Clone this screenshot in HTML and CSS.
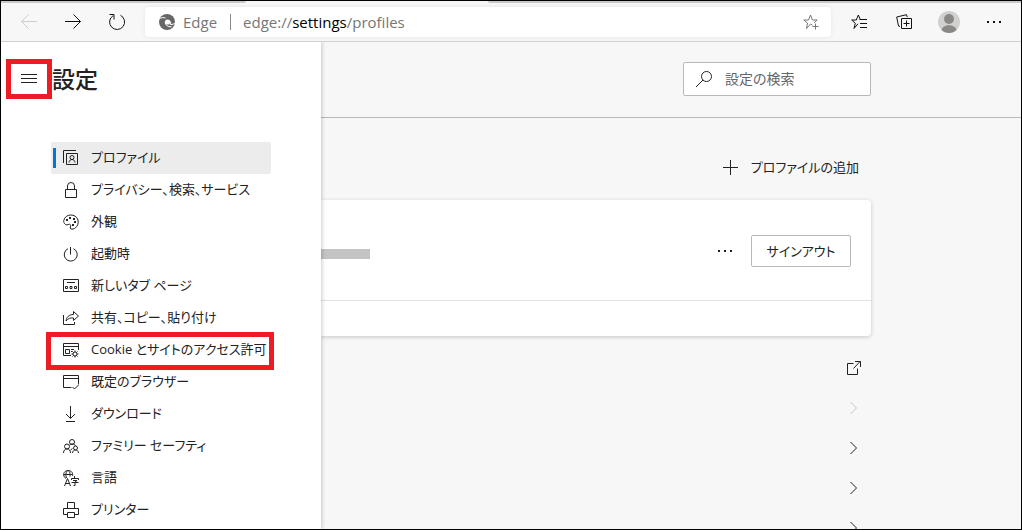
FILE: index.html
```html
<!DOCTYPE html>
<html lang="ja">
  <head>
    <meta charset="utf-8">
    <title>設定</title>
    <link rel="stylesheet" href="styles.css">
  </head>
  <body>
    <div class="window">
      <div class="tabstrip">
        <div class="tab-left"></div>
        <div class="tab-active"></div>
        <div class="tab-right"></div>
      </div>

      <div class="toolbar">
        <button class="tool disabled" aria-label="戻る">
          <svg width="18" height="18" viewBox="0 0 18 18"><path d="M17 8.500H1.500M8.500 1.500l-7 7 7 7"/></svg>
        </button>
        <button class="tool" aria-label="進む">
          <svg width="18" height="18" viewBox="0 0 18 18"><path d="M1 8.500h15.500M9.500 1.500l7 7-7 7"/></svg>
        </button>
        <button class="tool" aria-label="更新">
          <svg width="18" height="18" viewBox="0 0 18 18"><path d="M12.500 2.300A7.500 7.500 0 1 1 5 2.700M1.500 1.500H6v5"/></svg>
        </button>
        <div class="address">
          <svg class="edge-logo" width="16" height="16" viewBox="0 0 16 16">
            <circle cx="8" cy="8" r="8"/>
            <circle class="hole" cx="8.500" cy="8" r="2.600"/>
            <path class="cut" d="M0 5C2 3.500 4.500 3.300 6.500 4M6.200 8.500C6.500 11.500 9 13 12.500 12.800M10.500 6.500C12 8 12 10 11 11M12 10.500c1.500 0 3-.5 4-1.500"/>
          </svg>
          <span class="brand">Edge</span>
          <span class="separator"></span>
          <span class="url">edge://<b>settings</b>/profiles</span>
          <button class="favorite" aria-label="お気に入りに追加">
            <svg width="16" height="16" viewBox="0 0 16 16"><path d="M9.500 11.300L7.500 10 3.500 14.500 4.500 9 .8 6h4.700l2-5 2 5h4.700l-3.200 2.700M12.500 9.500v6M9.500 12.500h6"/></svg>
          </button>
        </div>
        <button class="tool wide" aria-label="お気に入り">
          <svg width="16" height="16" viewBox="0 0 16 16"><path d="M7 9.800L3 14.500 4.300 9.300.7 6h4.600l2-5 2 4.500M8.500 5.500H16M9 9.500h7M9 13.500h7"/></svg>
        </button>
        <button class="tool wide" aria-label="コレクション">
          <svg width="16" height="16" viewBox="0 0 16 16"><path d="M5.500 4.500h10v10h-10zM10.500 6.500v6M7.500 9.500h6M4 12.500L2.500 12 .7 3 10.500.7l.8 2.500"/></svg>
        </button>
        <button class="tool wide" aria-label="プロファイル">
          <svg class="avatar" width="22" height="22" viewBox="0 0 22 22">
            <circle class="ring" cx="11" cy="11" r="11"/>
            <circle class="person" cx="11" cy="8" r="5"/>
            <path class="person" d="M3.500 19c1-6.500 14-6.500 15 0-4 4-11 4-15 0z"/>
          </svg>
        </button>
        <button class="tool wide" aria-label="その他">
          <svg class="dots" width="16" height="4" viewBox="0 0 16 4"><path d="M1 1h2v2H1zM7 1h2v2H7zM13 1h2v2h-2z"/></svg>
        </button>
      </div>

      <div class="page">
        <aside class="sidebar">
          <div class="title-row">
            <button class="menu-button" aria-label="メニュー">
              <svg width="16" height="10" viewBox="0 0 16 10"><path d="M0 .5h16M0 4.500h16M0 8.500h16"/></svg>
            </button>
            <h1>設定</h1>
          </div>
          <nav>
            <a href="#" class="nav-item active">
              <svg width="16" height="16" viewBox="0 0 16 16"><path d="M3.500 3.500h11v11h-11zM.5 13V.5H13"/><circle cx="9" cy="7.500" r="2"/><path d="M6 12.500c0-4 6-4 6 0"/></svg>
              <span>プロファイル</span>
            </a>
            <a href="#" class="nav-item">
              <svg width="16" height="16" viewBox="0 0 16 16"><path d="M2.500 7.500h11v8h-11zM4.500 7.500V4a3.500 3.500 0 0 1 7 0v3.500"/></svg>
              <span>プライバシー、検索、サービス</span>
            </a>
            <a href="#" class="nav-item">
              <svg width="16" height="16" viewBox="0 0 16 16"><path d="M.8 6.500C2-.5 13-1 15 6c1.500 7-5 10-7 9-2-1.200.5-3-.5-4.200C6 9 4.500 12 2.500 10.500 1 9.300.5 8 .8 6.500z"/><path class="solid" d="M3 5h2v2H3zM6 3h2v2H6zM10 4h2v2h-2zM11 7h2v2h-2zM9 10h2v2H9z"/></svg>
              <span>外観</span>
            </a>
            <a href="#" class="nav-item">
              <svg width="16" height="16" viewBox="0 0 16 16"><path d="M7.500 1v7.500M5 2.700a6.500 6.500 0 1 0 5.500 0"/></svg>
              <span>起動時</span>
            </a>
            <a href="#" class="nav-item">
              <svg width="16" height="16" viewBox="0 0 16 16"><path d="M.5 1.500h15v12H.5zM4 4.500h8M2.500 8.500h2v2h-2zM7 8.500h2v2H7zM11.500 8.500h2v2h-2z"/></svg>
              <span>新しいタブ ページ</span>
            </a>
            <a href="#" class="nav-item">
              <svg width="16" height="16" viewBox="0 0 16 16"><path d="M.5 5v9.500h11V12M3 11c.5-4 3-6.500 7.500-6.500v-3l5 4.500-5 4.500V8C7.500 7.500 5 8.500 3 11z"/></svg>
              <span>共有、コピー、貼り付け</span>
            </a>
            <a href="#" class="nav-item marked">
              <svg width="16" height="16" viewBox="0 0 16 16"><path d="M8 13.500H.5v-12h15V8M.5 4.500h15M2.500 7.500h4v4h-4zM8 7.500h3M8 9.500h1.500"/><circle cx="12" cy="12" r="2"/><path d="M12 8.500V10M12 14v1.500M8.500 12H10M14 12h1.500M9.500 9.500l1 1M13.500 13.500l1 1M9.500 14.500l1-1M13.500 10.500l1-1"/></svg>
              <span>Cookie とサイトのアクセス許可</span>
            </a>
            <a href="#" class="nav-item">
              <svg width="16" height="16" viewBox="0 0 16 16"><path d="M8.500 13.500H.5v-12h15v9M.5 4.500h15M9.500 13l2 2 4-4"/></svg>
              <span>既定のブラウザー</span>
            </a>
            <a href="#" class="nav-item">
              <svg width="16" height="16" viewBox="0 0 16 16"><path d="M7.500 0v12M3 8l4.500 4.500L12 8M3 15.500h9"/></svg>
              <span>ダウンロード</span>
            </a>
            <a href="#" class="nav-item">
              <svg width="16" height="16" viewBox="0 0 16 16"><circle cx="9" cy="4" r="2.500"/><circle cx="4" cy="8.500" r="2.500"/><circle cx="12.500" cy="10" r="2"/><path d="M.5 15c0-5.500 7-5.500 7 0M9.500 15c0-4 6-4 6 0M6.500 7c2-1.500 5-1.500 6 1M7.500 12l2-1.500"/></svg>
              <span>ファミリー セーフティ</span>
            </a>
            <a href="#" class="nav-item">
              <svg width="16" height="16" viewBox="0 0 16 16"><path d="M3 8.500C-1 6 .5.500 5 .5S10 4 9.500 6M.5 4.500h9M4.500.5c-2 2-2 5-1 7.500M5.500.5C7.500 2.500 7 5 7 6.500M1.500 16l3-7.500 3 7.500M2.500 13.500h4M11.500 6v2M8.500 10V8.500h7V10M10 10.500h4L12 12v3.500h-1.500M8.500 12.500h7"/></svg>
              <span>言語</span>
            </a>
            <a href="#" class="nav-item">
              <svg width="16" height="16" viewBox="0 0 16 16"><path d="M4.500 6V.5h7V6M4.500 12.500h-4v-6h15v6h-4M4.500 10.500h7v5h-7z"/></svg>
              <span>プリンター</span>
            </a>
          </nav>
        </aside>

        <main>
          <div class="main-header">
            <div class="column">
              <label class="search">
                <svg width="18" height="18" viewBox="0 0 18 18"><circle cx="11.500" cy="6.500" r="5"/><path d="M8 10l-7 7"/></svg>
                <input type="search" placeholder="設定の検索" aria-label="設定の検索">
              </label>
            </div>
          </div>

          <div class="column content">
            <button class="add-profile">
              <svg width="16" height="16" viewBox="0 0 16 16"><path d="M7.500 0v15M0 7.500h15"/></svg>
              <span>プロファイルの追加</span>
            </button>
            <section class="card">
              <div class="account">
                <div class="redacted"></div>
                <button class="more" aria-label="その他のアクション">
                  <svg class="dots" width="16" height="4" viewBox="0 0 16 4"><path d="M1 1h2v2H1zM7 1h2v2H7zM13 1h2v2h-2z"/></svg>
                </button>
                <button class="signout">サインアウト</button>
              </div>
              <div class="card-footer"></div>
            </section>
            <div class="links">
              <a href="#" class="link-row" aria-label="アカウントの管理">
                <svg width="14" height="14" viewBox="0 0 14 14"><path d="M6.500 2.500h-6v11h10V7.500M6.500 7.500l6.500-7M8 .5h5.500V6"/></svg>
              </a>
              <a href="#" class="link-row faded" aria-label="同期">
                <svg width="14" height="14" viewBox="0 0 14 14"><path d="M3.500 1l6 6-6 6"/></svg>
              </a>
              <a href="#" class="link-row" aria-label="パスワード">
                <svg width="14" height="14" viewBox="0 0 14 14"><path d="M3.500 1l6 6-6 6"/></svg>
              </a>
              <a href="#" class="link-row" aria-label="お支払い情報">
                <svg width="14" height="14" viewBox="0 0 14 14"><path d="M3.500 1l6 6-6 6"/></svg>
              </a>
              <a href="#" class="link-row" aria-label="住所など">
                <svg width="14" height="14" viewBox="0 0 14 14"><path d="M3.500 1l6 6-6 6"/></svg>
              </a>
            </div>
          </div>
        </main>
      </div>
    </div>
  </body>
</html>
```
FILE: styles.css
```css
* {
  box-sizing: border-box;
}
body {
  margin: 0;
  font-family: "Open Sans", "Noto Sans CJK JP", sans-serif;
  font-size: 13px;
  font-feature-settings: "palt";
  color: #222;
}
button,
input {
  font: inherit;
  font-feature-settings: inherit;
  color: inherit;
}
button {
  display: flex;
  align-items: center;
  justify-content: center;
  padding: 0;
  border: none;
  background: none;
}
svg {
  display: block;
  flex: none;
  fill: none;
  stroke: currentColor;
}
.window {
  display: flex;
  flex-direction: column;
  height: 100vh;
  border: 1px solid black;
  background-color: #f7f7f7;
  overflow: hidden;
}

/* browser chrome */
.tabstrip {
  display: flex;
  flex: none;
  height: 2px;
}
.tab-left {
  width: 245px;
  background-color: #c8c8c8;
  border-bottom-right-radius: 2px;
}
.tab-active {
  width: 242px;
}
.tab-right {
  flex: 1;
  background-color: #c8c8c8;
  border-bottom-left-radius: 2px;
}
.toolbar {
  display: flex;
  align-items: center;
  flex: none;
  height: 39px;
  padding: 0 5px 0 6px;
  border-bottom: 1px solid #d0d0d0;
}
.tool {
  width: 44px;
  height: 32px;
  color: #111;
}
.tool.wide {
  width: 45px;
}
.tool.disabled {
  color: #ccc;
}
.address {
  display: flex;
  align-items: center;
  flex: 1;
  height: 30px;
  margin: 0 5px 0 6px;
  padding: 0 12px 0 14px;
  border-radius: 4px;
  background-color: white;
  box-shadow: 0 0 4px rgba(0, 0, 0, 0.08);
  font-size: 15px;
  color: #767676;
}
.edge-logo {
  fill: #666;
  stroke: none;
}
.edge-logo .hole {
  fill: white;
}
.edge-logo .cut {
  fill: none;
  stroke: white;
}
.brand {
  margin-left: 8px;
}
.separator {
  width: 1px;
  height: 16px;
  margin: 0 12px 0 13px;
  background-color: #888;
}
.url {
  flex: 1;
}
.url b {
  font-weight: 400;
  color: black;
}
.favorite {
  color: #767676;
}
.avatar {
  stroke: none;
}
.avatar .ring {
  fill: #d2d0ce;
}
.avatar .person {
  fill: #8a8886;
}
.dots,
.solid {
  fill: currentColor;
  stroke: none;
}

.page {
  display: flex;
  flex: 1;
  min-height: 0;
}

/* sidebar */
.sidebar {
  position: relative;
  flex: none;
  width: 320px;
  padding-top: 17px;
  background-color: white;
  box-shadow: 1px 0 4px rgba(0, 0, 0, 0.2);
  clip-path: inset(0 -8px 0 0);
}
.title-row {
  display: flex;
  align-items: center;
  padding-left: 5px;
}
.menu-button {
  width: 46px;
  height: 40px;
  border: 5px solid #ed1c24;
}
h1 {
  margin: 0;
  font-size: 23px;
  line-height: 40px;
  font-weight: 500;
}
nav {
  margin: 43px 50px 0;
}
.nav-item {
  display: flex;
  align-items: center;
  gap: 12px;
  position: relative;
  height: 32px;
  padding-left: 12px;
  color: #222;
  text-decoration: none;
  white-space: nowrap;
}
.nav-item span,
.add-profile span {
  padding-bottom: 3px;
}
.nav-item.active {
  border-radius: 2px;
  background-color: #ececec;
}
.nav-item.active::before {
  content: "";
  position: absolute;
  left: 2px;
  top: 6px;
  width: 3px;
  height: 20px;
  background-color: #0078d4;
}
.nav-item.marked::after {
  content: "";
  position: absolute;
  inset: -2px -3px -4px -5px;
  border: 5px solid #ed1c24;
}

/* main column */
main {
  flex: 1;
  min-width: 0;
}
.column {
  max-width: 550px;
}
.main-header {
  padding: 20px 0 21px;
  border-bottom: 1px solid #b8b8b8;
}
.search {
  display: flex;
  align-items: center;
  gap: 12px;
  width: 188px;
  height: 34px;
  margin-left: auto;
  padding: 0 11px;
  border: 1px solid #b8b8b8;
  border-radius: 2px;
  background-color: white;
}
.search input {
  flex: 1;
  min-width: 0;
  padding: 0 0 2px;
  border: none;
  outline: none;
  background: none;
}
.search input::placeholder {
  color: #666;
}
.content {
  padding-top: 34px;
}
.add-profile {
  gap: 12px;
  height: 32px;
  margin-left: auto;
  padding-right: 12px;
}
.card {
  margin-top: 16px;
  border-radius: 0 4px 4px 0;
  background-color: white;
  box-shadow: 0 1px 4px rgba(0, 0, 0, 0.2);
}
.account {
  display: flex;
  align-items: center;
  height: 101px;
  padding: 2px 20px 0 0;
  border-bottom: 1px solid #e2e2e2;
}
.redacted {
  width: 49px;
  height: 10px;
  margin-top: 6px;
  background-color: #c3c3c3;
}
.more {
  width: 32px;
  height: 32px;
  margin: 0 10px 0 auto;
}
.signout {
  width: 100px;
  height: 32px;
  padding-bottom: 2px;
  border: 1px solid #b8b8b8;
  border-radius: 2px;
}
.card-footer {
  height: 35px;
}
.links {
  padding: 12px 10px 0 0;
}
.link-row {
  display: flex;
  align-items: center;
  justify-content: flex-end;
  height: 40px;
  color: #222;
}
.link-row.faded {
  color: #c4c4c4;
}
.search input {
  font-size: 14px;
}
```
